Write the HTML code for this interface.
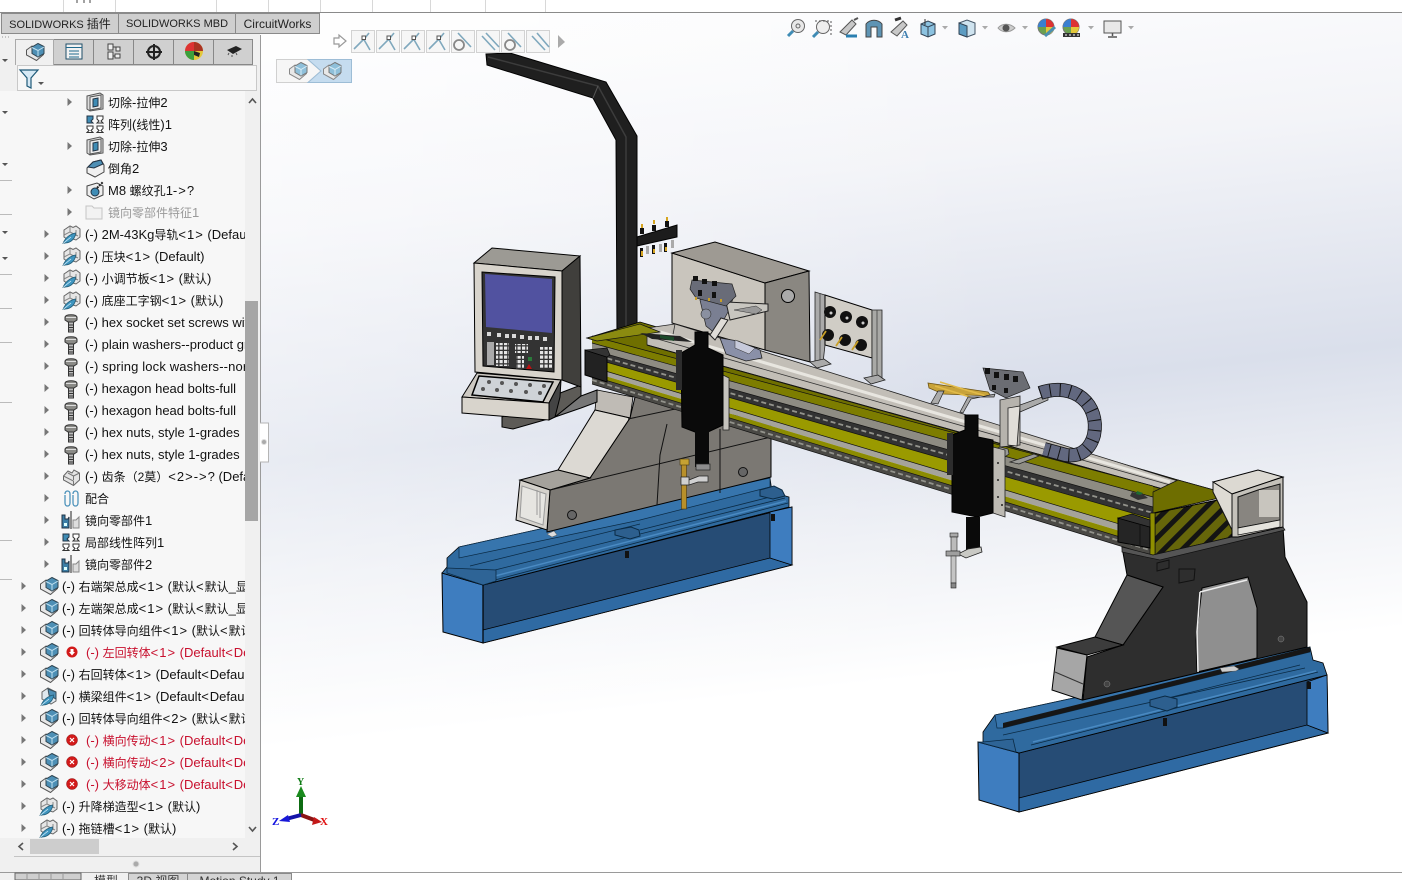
<!DOCTYPE html>
<html><head><meta charset="utf-8"><title>SOLIDWORKS</title>
<style>
html,body{margin:0;padding:0;width:1402px;height:880px;overflow:hidden;background:#fff}
body{position:relative;font-family:"Liberation Sans","Noto Sans CJK SC",sans-serif;color:#111;font-size:13px}
#vp{position:absolute;left:261px;top:13px;width:1141px;height:860px;background:linear-gradient(90deg,rgba(255,255,255,.4),rgba(255,255,255,0) 65%),linear-gradient(174deg,#fff 0,#f3f4f8 22%,#dadfeb 46%,#eef0f5 60%,#fff 75%,#fff 100%)}
#side{position:absolute;left:0;top:13px;width:260px;height:867px;background:#f0f0f0}
#tree{position:absolute;left:0;top:91px;width:245px;height:747px;background:#f7f7f7;overflow:hidden}
.r{position:absolute;white-space:nowrap;height:18px;line-height:18px;margin-top:2px}
.r i{font-style:normal;font-size:12px}
.r b{font-weight:normal;letter-spacing:1px}
.e{color:#c8102e}
.g{color:#9a9a9a}
.tab{position:absolute;top:13px;height:21px;line-height:21px;background:#cfcfcf;border:1px solid #8a8a8a;box-sizing:border-box;text-align:center;font-size:11px;color:#222}
.tab i{font-style:normal;font-size:12px}
.bt{position:absolute;top:873px;height:8px;line-height:14px;font-size:12px;color:#333;background:#d4d4d4;border:1px solid #8a8a8a;border-bottom:0;box-sizing:border-box;text-align:center;overflow:hidden}
svg{position:absolute;left:0;top:0;overflow:hidden}
</style></head><body>
<div id="vp"></div>
<div id="side"></div>
<div id="tree">
<div class="r" style="left:108px;top:1px"><i>切除</i>-<i>拉伸</i>2</div>
<div class="r" style="left:108px;top:23px"><i>阵列</i>(<i>线性</i>)1</div>
<div class="r" style="left:108px;top:45px"><i>切除</i>-<i>拉伸</i>3</div>
<div class="r" style="left:108px;top:67px"><i>倒角</i>2</div>
<div class="r" style="left:108px;top:89px">M8 <i>螺纹孔</i>1<b>-&gt;</b>?</div>
<div class="r g" style="left:108px;top:111px"><i>镜向零部件特征</i>1</div>
<div class="r" style="left:85px;top:133px">(-) 2M-43Kg<i>导轨</i><b>&lt;1&gt;</b> (Default</div>
<div class="r" style="left:85px;top:155px">(-) <i>压块</i><b>&lt;1&gt;</b> (Default)</div>
<div class="r" style="left:85px;top:177px">(-) <i>小调节板</i><b>&lt;1&gt;</b> (<i>默认</i>)</div>
<div class="r" style="left:85px;top:199px">(-) <i>底座工字钢</i><b>&lt;1&gt;</b> (<i>默认</i>)</div>
<div class="r" style="left:85px;top:221px">(-) hex socket set screws with</div>
<div class="r" style="left:85px;top:243px">(-) plain washers--product grade</div>
<div class="r" style="left:85px;top:265px;letter-spacing:.15px">(-) spring lock washers--normal</div>
<div class="r" style="left:85px;top:287px">(-) hexagon head bolts-full</div>
<div class="r" style="left:85px;top:309px">(-) hexagon head bolts-full</div>
<div class="r" style="left:85px;top:331px">(-) hex nuts, style 1-grades</div>
<div class="r" style="left:85px;top:353px">(-) hex nuts, style 1-grades</div>
<div class="r" style="left:85px;top:375px">(-) <i>齿条（2莫）</i><b>&lt;2&gt;-&gt;</b>? (Default</div>
<div class="r" style="left:85px;top:397px"><i>配合</i></div>
<div class="r" style="left:85px;top:419px"><i>镜向零部件</i>1</div>
<div class="r" style="left:85px;top:441px"><i>局部线性阵列</i>1</div>
<div class="r" style="left:85px;top:463px"><i>镜向零部件</i>2</div>
<div class="r" style="left:62px;top:485px">(-) <i>右端架总成</i><b>&lt;1&gt;</b> (<i>默认</i><b>&lt;</b><i>默认</i>_<i>显示</i></div>
<div class="r" style="left:62px;top:507px">(-) <i>左端架总成</i><b>&lt;1&gt;</b> (<i>默认</i><b>&lt;</b><i>默认</i>_<i>显示</i></div>
<div class="r" style="left:62px;top:529px">(-) <i>回转体导向组件</i><b>&lt;1&gt;</b> (<i>默认</i><b>&lt;</b><i>默认</i></div>
<div class="r e" style="left:86px;top:551px">(-) <i>左回转体</i><b>&lt;1&gt;</b> (Default<b>&lt;</b>Default</div>
<div class="r" style="left:62px;top:573px">(-) <i>右回转体</i><b>&lt;1&gt;</b> (Default<b>&lt;</b>Default</div>
<div class="r" style="left:62px;top:595px">(-) <i>横梁组件</i><b>&lt;1&gt;</b> (Default<b>&lt;</b>Default</div>
<div class="r" style="left:62px;top:617px">(-) <i>回转体导向组件</i><b>&lt;2&gt;</b> (<i>默认</i><b>&lt;</b><i>默认</i></div>
<div class="r e" style="left:86px;top:639px">(-) <i>横向传动</i><b>&lt;1&gt;</b> (Default<b>&lt;</b>Default</div>
<div class="r e" style="left:86px;top:661px">(-) <i>横向传动</i><b>&lt;2&gt;</b> (Default<b>&lt;</b>Default</div>
<div class="r e" style="left:86px;top:683px">(-) <i>大移动体</i><b>&lt;1&gt;</b> (Default<b>&lt;</b>Default</div>
<div class="r" style="left:62px;top:705px">(-) <i>升降梯造型</i><b>&lt;1&gt;</b> (<i>默认</i>)</div>
<div class="r" style="left:62px;top:727px">(-) <i>拖链槽</i><b>&lt;1&gt;</b> (<i>默认</i>)</div>
</div>

<svg width="1402" height="880" viewBox="0 0 1402 880" xmlns="http://www.w3.org/2000/svg">
<defs>
<symbol id="ar" viewBox="0 0 8 10" width="8" height="10"><path d="M1.5 1l4.500 4-4.500 4z" fill="#777"/></symbol>
<symbol id="p" viewBox="0 0 20 20" width="20" height="20"><path d="M1.500 8 7 4l3 1 3-3 5.500 2.500v8l-7 6-10-5.500z" fill="#e8e8e8" stroke="#555"/><path d="M7 5 13 1.500 19 4.500v7l-6 3.500-6-3.500z" fill="#4d8fb5" stroke="#2f4450"/><path d="M7 5.500l6 3 6-3.500M13 8.500v6" fill="none" stroke="#bfe0f0"/></symbol>
<symbol id="pl" viewBox="0 0 20 20" width="20" height="20"><path d="M1.500 8 7 4l3 1 3-3 5.500 2.500v8l-7 6-10-5.500z" fill="#e8e8e8" stroke="#888"/><path d="M7 5 13 1.500 19 4.500v7l-6 3.500-6-3.500z" fill="#8fc0da" stroke="#777"/><path d="M7 5.500l6 3 6-3.500M13 8.500v6" fill="none" stroke="#d8ecf6"/></symbol>
<symbol id="gp" viewBox="0 0 20 20" width="20" height="20"><path d="M1.500 9 6 4l4 2 2-3 5.500 3v7l-6 5.500-10-5.500z" fill="#e4e4e4" stroke="#666"/><path d="M6 6l5.500 3 6-3M11.500 9v4M1.500 9l10 5v5" fill="none" stroke="#777"/></symbol>
<symbol id="gpen" viewBox="0 0 20 20" width="20" height="20"><path d="M3 6 9 2l3 1.500L15 2l4 3v8l-4 3-3-1-3 2-6-4z" fill="#e6e6e6" stroke="#666"/><path d="M9 2v6l-6 3M9 8l8 4M15 6v6" fill="none" stroke="#888"/><path d="M2 19.500C4 14 9 10 14.500 9c0 5-4 9.500-10 10z" fill="#3f95bf" stroke="#235d78" stroke-width=".8"/><path d="M2 19.500 10 13" stroke="#d6eefa" stroke-width=".8"/></symbol>
<symbol id="bpen" viewBox="0 0 20 20" width="20" height="20"><path d="M3 6 9 2l8 4v9l-5 3-9-5z" fill="#dfe8ee" stroke="#666"/><path d="M9 3l8 3v7l-7-4z" fill="#4d8fb5" stroke="#3a4f5c"/><path d="M2 19.500C4 14 9 10 14.500 9c0 5-4 9.500-10 10z" fill="#3f95bf" stroke="#235d78" stroke-width=".8"/><path d="M2 19.500 10 13" stroke="#d6eefa" stroke-width=".8"/></symbol>
<symbol id="b" viewBox="0 0 14 20" width="14" height="20"><path d="M1 4c1-3 11-3 12 0v3l-3 2H4L1 7z" fill="#8a8a86" stroke="#333"/><path d="M2 4.500h10" stroke="#ddd"/><path d="M4.500 9h5v10h-5z" fill="#bbb" stroke="#333"/><path d="M4.500 12h5M4.500 14.500h5M4.500 17h5" stroke="#333"/></symbol>
<symbol id="cut" viewBox="0 0 20 20" width="20" height="20"><path d="M2 4l13-3 3 2v14l-13 2-3-2z" fill="#ddd" stroke="#555"/><path d="M5 5l11-2v13L5 18z" fill="#eee" stroke="#555"/><path d="M8 7l5-1v8l-5 1z" fill="#3f8cb5" stroke="#234"/></symbol>
<symbol id="pat" viewBox="0 0 18 18" width="18" height="18"><path d="M1 1h6v3L5 6l2 2H1z" fill="#3f8cb5" stroke="#234"/><path d="M11 1h6v3l-2 2 2 2h-6l2-2-2-2zM1 11h6v2.500L5 15.500l2 2H1l2-2-2-2zM11 11h6v2.500l-2 2 2 2h-6l2-2-2-2z" fill="#fff" stroke="#333"/></symbol>
<symbol id="cham" viewBox="0 0 20 20" width="20" height="20"><path d="M2 10 8 4l8-2 3 5v7l-9 5-8-4z" fill="#f0f0f0" stroke="#444"/><path d="M3 9l5-5 8-2 2 4-9 4z" fill="#4d8fb5" stroke="#234"/></symbol>
<symbol id="hole" viewBox="0 0 20 20" width="20" height="20"><path d="M2 6l10-3 6 3v9l-9 4-7-4z" fill="#eee" stroke="#444"/><circle cx="10" cy="12" r="4" fill="#3f8cb5" stroke="#234"/><path d="M12 8l6-6" stroke="#222" stroke-width="2" stroke-dasharray="2 1"/></symbol>
<symbol id="fo" viewBox="0 0 18 16" width="18" height="16"><path d="M1 2h6l2 2h8v11H1z" fill="#f2f2f2" stroke="#c4c4c4"/></symbol>
<symbol id="clip" viewBox="0 0 18 18" width="18" height="18"><path d="M3 5c0-4 5-4 5 0v9c0 4-5 4-5 0V6M11 5c0-4 5-4 5 0v9c0 4-5 4-5 0V6" fill="none" stroke="#4e93bb" stroke-width="1.300"/></symbol>
<symbol id="mir" viewBox="0 0 20 18" width="20" height="18"><path d="M1 4h3v4h3l1-2v11H1z" fill="#3b7ea6" stroke="#234"/><path d="M3 12h3v3H3z" fill="#dff"/><path d="M10 0v18" stroke="#222"/><path d="M12 17V9h3l3-3v11z" fill="#ddd" stroke="#888"/></symbol>
<symbol id="el" viewBox="0 0 12 12" width="12" height="12"><circle cx="6" cy="6" r="5.500" fill="#d21a1a" stroke="#8c1010" stroke-width=".5"/><path d="M4 4l4 4M8 4l-4 4" stroke="#fff" stroke-width="1.200"/></symbol>
<symbol id="ed" viewBox="0 0 12 12" width="12" height="12"><circle cx="6" cy="6" r="5.500" fill="#d21a1a"/><path d="M4.500 3h3v3H9L6 9.500 3 6h1.500z" fill="#fff"/></symbol>
<symbol id="btn" viewBox="0 0 24 24" width="24" height="24"><rect x=".5" y=".5" width="23" height="22" fill="#f6f6f6" stroke="#d2d2d2"/></symbol>
<symbol id="ang" viewBox="0 0 24 24" width="24" height="24"><path d="M3 19 14 8l4-5M12 8l7 12" fill="none" stroke="#7fa8bd" stroke-width="1.600"/><rect x="11" y="6" width="3.500" height="3.500" fill="#fff" stroke="#555"/></symbol>
<symbol id="ca" viewBox="0 0 7 4" width="7" height="4"><path d="M0 0h6L3 3.500z" fill="#aaa"/></symbol>
<pattern id="hz" patternUnits="userSpaceOnUse" width="13" height="13" patternTransform="rotate(45)"><rect width="13" height="13" fill="#66660a"/><rect width="5" height="13" fill="#141414"/></pattern>
<pattern id="kp" patternUnits="userSpaceOnUse" width="4.500" height="4.500"><rect width="4.500" height="4.500" fill="#333"/><rect width="3.200" height="3.200" fill="#e6e6e6"/></pattern>
</defs>

<!-- top strip -->
<rect x="0" y="0" width="1402" height="12" fill="#fff"/>
<path d="M0 12.500H1402" stroke="#8a8a8a"/>
<path d="M63.500 0V12M115.500 0V12M216.500 0V12M268.500 0V12M320.500 0V12M372.500 0V12M430.500 0V12M485.500 0V12M545.500 0V12" stroke="#d8d8d8"/>
<path d="M77 0v3M84 0v3M90 0v3" stroke="#444"/>
<path d="M260.500 35V873" stroke="#9a9a9a"/>

<!-- BLUE RAIL LEFT -->
<path d="M483 585 792 507V565L483 643z" fill="#264c75" stroke="#000" stroke-width="1"/>
<path d="M483 630 770 558 792 565 483 643z" fill="#2f6aa3" stroke="#000" stroke-width=".8"/>
<path d="M770 512 792 507V565L770 558z" fill="#3e7dbf" stroke="#000" stroke-width=".8"/>
<path d="M442 573 483 585V643L443 632z" fill="#3e7dbf" stroke="#000" stroke-width="1"/>
<path d="M442 573 447 567V558L459 547 770 478 772 492 789 497V507L483 585z" fill="#2f6a9f" stroke="#000" stroke-width=".8"/>
<path d="M459 547 770 478V487L640 520 459 558z" fill="#3775ad" stroke="#0a2a44" stroke-width=".7"/>
<path d="M495 570 785 498M495 580 788 503M640 530 770 497M470 566 640 524" stroke="#0a2a44" stroke-width=".8" fill="none"/>
<path d="M495 576 786 501" stroke="#4a8ac2" stroke-width="1.500" fill="none"/>
<path d="M447 568 496 570V581L483 585 447 573z" fill="#2e6496" stroke="#0a2a44" stroke-width=".8"/>
<path d="M615 530l16-3 8 3 1 6-10 3-15-4z" fill="#2d5f8e" stroke="#0a2a44"/>
<path d="M760 490l14-4 8 4 3 6-12 3-13-3z" fill="#2d5f8e" stroke="#0a2a44"/>
<rect x="625" y="551" width="4" height="7" fill="#111"/><rect x="771" y="514" width="4" height="7" fill="#111"/>
<path d="M483 585V643" stroke="#000" stroke-width="1.200"/>

<!-- BLUE RAIL RIGHT -->
<path d="M1019 753 1327 675 1328 733 1019 812z" fill="#264c75" stroke="#000" stroke-width="1"/>
<path d="M1019 798 1307 725 1328 733 1019 812z" fill="#2f6aa3" stroke="#000" stroke-width=".8"/>
<path d="M1307 682 1327 675 1328 733 1307 725z" fill="#3e7dbf" stroke="#000" stroke-width=".8"/>
<path d="M978 742 1019 753V812L979 800z" fill="#3e7dbf" stroke="#000" stroke-width="1"/>
<path d="M983 742V732L995 715 1310 647 1313 660 1323 663 1327 675 1019 753z" fill="#2f6a9f" stroke="#000" stroke-width=".8"/>
<path d="M995 715 1310 647V652L1003 728H997z" fill="#3775ad" stroke="#0a2a44" stroke-width=".7"/>
<path d="M1003 735 1305 668M1031 745 1318 672M1160 700 1300 665" stroke="#0a2a44" stroke-width=".8" fill="none"/>
<path d="M1033 742 1316 671" stroke="#4a8ac2" stroke-width="1.500" fill="none"/>
<path d="M1003 723 1310 647V652L1003 728z" fill="#161616"/>
<path d="M1150 700l15-4 12 3v8l-10 4-17-5z" fill="#2d5f8e" stroke="#0a2a44"/>
<path d="M983 742l30-3 3 13-38-10z" fill="#2e6496" stroke="#0a2a44" stroke-width=".8"/>
<rect x="1163" y="718" width="4" height="8" fill="#111"/><rect x="1307" y="682" width="4" height="7" fill="#111"/>

<!-- LEFT LEG -->
<path d="M550 490 590 478 630 418 635 397 680 408 771 420V477L547 532z" fill="#7b7873" stroke="#000"/>
<path d="M597 390 633 397 630 418 595 410z" fill="#bfbbb5" stroke="#000" stroke-width=".8"/>
<path d="M558 470 595 410 630 418 590 478z" fill="#dcd9d3" stroke="#000"/>
<path d="M520 480 558 470 590 478 550 490z" fill="#a5a29c" stroke="#000"/>
<path d="M520 480 550 490 547 530 516 520z" fill="#d5d2cc" stroke="#000"/>
<path d="M522 486 546 494 543 525 520 517z" fill="#e6e5e1" stroke="#9a9a9a"/>
<path d="M537 490V515M540 492V518" stroke="#999" fill="none"/>
<path d="M550 490 771 437M628 419 680 408" stroke="#111" fill="none"/>
<path d="M667 424 660 455 657 505M720 429V493" stroke="#111" fill="none"/>
<circle cx="572" cy="515" r="4.500" fill="#666" stroke="#111"/><circle cx="743" cy="472" r="4.500" fill="#666" stroke="#111"/>
<path d="M547 534l5 3 5-2-3-4z" fill="#ddd" stroke="#555" stroke-width=".5"/>

<!-- RIGHT LEG -->
<path d="M1122 547 1283 527 1285 557 1307 602V647L1083 700 1087 657 1123 645 1163 587 1127 575z" fill="#2e2e2e" stroke="#000"/>
<path d="M1127 575 1163 587 1123 645 1095 637z" fill="#555" stroke="#000"/>
<path d="M1057 647 1095 637 1123 645 1087 655z" fill="#3c3c3c" stroke="#000"/>
<path d="M1057 648 1087 655 1082 700 1052 690z" fill="#a6a6a6" stroke="#000"/>
<path d="M1055 672 1083 684" stroke="#333" fill="none"/>
<path d="M1202 588 1248 577 1257 608V658L1197 672 1196 640z" fill="#8f8f8f" stroke="#000"/>
<path d="M1200 592 1247 580M1200 592 1197 632 1198 672" stroke="#eee" stroke-width="1.500" fill="none"/>
<path d="M1179 569h16l-1 11-15 3zM1157 563l12-3v8l-12 3z" fill="none" stroke="#111"/>
<circle cx="1107" cy="684" r="3" fill="#444" stroke="#888" stroke-width=".5"/><circle cx="1281" cy="639" r="3" fill="#444" stroke="#888" stroke-width=".5"/>
<path d="M1220 668l14-2 5 3-3 2-14 1z" fill="#ccc" stroke="#555" stroke-width=".5"/>

<!-- POST + ARM -->
<path d="M486 54 510 53 606 82 637 136V335H617L616 140 593 98 487 65z" fill="#1f1f1f" stroke="#000"/>
<path d="M488 57 598 86 626 137V335" stroke="#3c3c3c" stroke-width="1.500" fill="none"/>
<path d="M593 98 598 86" stroke="#555"/>
<path d="M637 237 677 225V237L637 246z" fill="#1c1c1c" stroke="#000"/>
<g fill="#111"><rect x="640" y="228" width="4" height="6"/><rect x="652" y="225" width="4" height="6"/><rect x="665" y="221" width="4" height="6"/><rect x="640" y="248" width="3" height="9"/><rect x="652" y="245" width="3" height="9"/><rect x="664" y="243" width="3" height="9"/></g>
<g fill="#aaa"><rect x="646" y="246" width="3" height="8"/><rect x="659" y="244" width="3" height="8"/><rect x="671" y="240" width="3" height="8"/></g>
<g fill="#d6a520"><rect x="641" y="224" width="2" height="4"/><rect x="653" y="220" width="2" height="4"/><rect x="666" y="217" width="2" height="4"/><rect x="641" y="251" width="2" height="5"/><rect x="653" y="249" width="2" height="4"/><rect x="665" y="247" width="2" height="4"/></g>

<!-- CONSOLE -->
<path d="M502 417V427L513 429 555 417 581 396V385L555 395z" fill="#5d5b57" stroke="#000"/>
<path d="M581 396 597 390V402L581 408 555 417z" fill="#777" stroke="#000"/>
<path d="M474 263 492 248 580 256 562 271z" fill="#9c9a94" stroke="#000"/>
<path d="M562 271 580 256 581 387 562 380z" fill="#403f3c" stroke="#000"/>
<path d="M474 263 562 271V380L475 372z" fill="#d8d4cc" stroke="#000"/>
<path d="M482 272 555 277 554 372 483 366z" fill="#333" stroke="#000"/>
<path d="M485 274 552 279V333L486 327z" fill="#5152a0"/>
<g fill="#d8d8d8"><rect x="487" y="332" width="4" height="4"/><rect x="497" y="333" width="4" height="4"/><rect x="505" y="334" width="4" height="4"/><rect x="512" y="334" width="4" height="4"/><rect x="520" y="335" width="4" height="4"/><rect x="528" y="336" width="4" height="4"/><rect x="535" y="336" width="4" height="4"/><rect x="543" y="337" width="4" height="4"/></g>
<rect x="487" y="342" width="7" height="23" fill="#aaa"/>
<rect x="496" y="343" width="13" height="23" fill="url(#kp)"/><rect x="515" y="344" width="13" height="9" fill="url(#kp)"/><rect x="516" y="356" width="8" height="13" fill="url(#kp)"/><rect x="539" y="347" width="13" height="22" fill="url(#kp)"/>
<rect x="528" y="357" width="4" height="4" fill="#2a7a3a"/><path d="M529 364l3 5h-6z" fill="#b11"/>
<path d="M477 373 561 380 549 403 462 397z" fill="#cdc9c2" stroke="#000"/>
<path d="M479 376 553 382 543 402 472 395z" fill="#cfd3d7" stroke="#000" stroke-width="1.500"/>
<g fill="#555"><circle cx="489" cy="382" r="2"/><circle cx="502" cy="383" r="2"/><circle cx="516" cy="384" r="2"/><circle cx="530" cy="385" r="2"/><circle cx="544" cy="386" r="2"/><circle cx="483" cy="389" r="2"/><circle cx="497" cy="390" r="2"/><circle cx="511" cy="391" r="2"/><circle cx="526" cy="392" r="2"/><circle cx="540" cy="393" r="2"/></g>
<path d="M462 397 549 403V420L462 413z" fill="#d8d4cc" stroke="#000"/>
<path d="M549 403 561 380 560 397 555 417 549 420z" fill="#444" stroke="#000"/>

<!-- BIG BOX + PANEL -->
<path d="M672 253 765 283V350L672 323z" fill="#c9c5bd" stroke="#000"/>
<path d="M672 253 715 242 809 271 765 283z" fill="#9e9a93" stroke="#000"/>
<path d="M765 283 809 271 810 362 765 350z" fill="#8a8781" stroke="#000"/>
<circle cx="788" cy="296" r="6.500" fill="#aaa" stroke="#000"/>
<path d="M815 292l10 3v50l-2 18h-8z" fill="#aaa" stroke="#222" stroke-width=".8"/>
<path d="M825 295 872 310V358L825 345z" fill="#d0cdc6" stroke="#000"/>
<path d="M872 310h10v68h-10z" fill="#a9a9a6" stroke="#222" stroke-width=".8"/>
<path d="M877 310v68M820 293v70" stroke="#444" stroke-width=".8"/>
<path d="M810 362l14-3 7 5-14 4zM864 378l14-3 7 5-14 4z" fill="#aaa" stroke="#222" stroke-width=".8"/>
<g fill="#111"><circle cx="830" cy="312" r="6"/><circle cx="846" cy="317" r="6"/><circle cx="862" cy="322" r="6"/><circle cx="828" cy="335" r="6"/><circle cx="845" cy="340" r="6"/><circle cx="861" cy="345" r="6"/></g>
<path d="M820 340l6-9M836 346l6-9M852 350l6-9" stroke="#c9a028" stroke-width="1.800"/>
<circle cx="831" cy="313" r="1.500" fill="#ccc"/><circle cx="847" cy="318" r="1.500" fill="#ccc"/><circle cx="863" cy="323" r="1.500" fill="#ccc"/>

<!-- BEAM TOP -->
<path d="M587 338 640 322 1178 480 1232 495 1153 513z" fill="#6f6f00" stroke="#000" stroke-width=".8"/>
<path d="M647 328 675 324 1178 481 1177 493 820 393 647 345z" fill="#c2beb7" stroke="#222" stroke-width=".8"/>
<path d="M647 336 1177 487M675 324 672 340" stroke="#333" stroke-width=".8" fill="none"/>
<path d="M660 332 1170 482" stroke="#e8e6e0" stroke-width="3"/>
<path d="M647 345 1177 493" stroke="#111" stroke-width="1"/>

<!-- BEAM FRONT BANDS -->
<path d="M592 336 1153 486V497L592 343z" fill="#7d7d00"/>
<path d="M592 343 1153 497V507L592 350z" fill="#8e8c83"/>
<path d="M592 350 1153 507V519L592 358z" fill="#333"/>
<path d="M592 358 1153 519V534L592 367z" fill="#9a9a00"/>
<path d="M592 367 1153 534V541L592 372z" fill="#a5a39b"/>
<path d="M592 372 1153 541V547L592 376z" fill="#8c8c00"/>
<path d="M592 376 1153 547V556L592 384z" fill="#4a4945"/>
<path d="M592 354 1153 513" stroke="#93938c" stroke-width="1.800" stroke-dasharray="5 3" fill="none"/>
<path d="M592 380 1153 551" stroke="#93938c" stroke-width="1.800" stroke-dasharray="5 3" fill="none"/>
<path d="M592 336 1153 486M592 343 1153 497M592 350 1153 507M592 358 1153 519M592 367 1153 534M592 376 1153 547M592 384 1153 556" stroke="#111" stroke-width=".7" fill="none"/>
<path d="M587 338 640 324 660 332 597 341z" fill="#8b8b10" stroke="#111" stroke-width=".7"/>
<path d="M640 333l40 3 12 6-40-3z" fill="#222"/>
<path d="M660 335l14 2v4l-14-3z" fill="#1c4a2a"/>

<!-- Left end box -->
<path d="M585 350 607 357V382L585 375z" fill="#222" stroke="#000"/>
<path d="M585 350l22-2 3 7-3 2z" fill="#333" stroke="#000" stroke-width=".6"/>

<!-- Machine on left box -->
<path d="M700 300l6 26 10 8 12-22 6-16-20-6z" fill="#7a7f92" stroke="#222" stroke-width=".7"/>
<path d="M726 302 768 304 768 311 730 320z" fill="#c8c6c0" stroke="#222"/>
<path d="M710 335 721 318 728 320 715 340z" fill="#e0ddd8" stroke="#222"/>
<path d="M720 338l18 3 22 9 2 8-16 3-20-7z" fill="#8a90a8" stroke="#222" stroke-width=".8"/>
<path d="M735 340l20 8-6 6-14-6z" fill="#c7cadb" stroke="#333" stroke-width=".5"/>
<path d="M734 310l22-4 6 4-6 4z" fill="#999" stroke="#333" stroke-width=".5"/>
<path d="M692 280l40 4 4 12-10 10-30-8-6-9z" fill="#696c78" stroke="#222" stroke-width=".7"/>
<g fill="#111"><rect x="693" y="276" width="5" height="5"/><rect x="702" y="279" width="5" height="5"/><rect x="712" y="281" width="5" height="5"/><rect x="698" y="290" width="4" height="6"/><rect x="712" y="292" width="4" height="6"/></g>
<g fill="#c9a028"><rect x="695" y="297" width="2" height="3"/><rect x="708" y="298" width="2" height="3"/><rect x="720" y="299" width="2" height="3"/></g>
<circle cx="706" cy="314" r="5" fill="#8a90a0" stroke="#333" stroke-width=".6"/>

<!-- Left carriage -->
<path d="M723 375 729 378V430H723z" fill="#c5c3bd" stroke="#222" stroke-width=".8"/>
<path d="M681 353 695 345V332H708V348L723 355V425L708 432 695 432 682 427z" fill="#0a0a0a" stroke="#000"/>
<rect x="676" y="350" width="6" height="40" fill="#2d2d2d"/>
<rect x="695" y="431" width="14" height="36" fill="#0a0a0a"/>
<rect x="696" y="464" width="14" height="6" fill="#8d8d8d" stroke="#222" stroke-width=".7"/>
<rect x="681.500" y="462" width="5" height="47" fill="#b8902a" stroke="#4a3a10" stroke-width=".6"/>
<rect x="680" y="459" width="9" height="6" fill="#c6a233" stroke="#4a3a10" stroke-width=".6"/>
<path d="M681 477h8v8h-8zM689 480l10-4h9v6h-10l-9 3z" fill="#d0d0d0" stroke="#222" stroke-width=".7"/>

<!-- Right machine -->
<path d="M928 383l60 9 3 4-48-2-14-6z" fill="#c8a33a" stroke="#6e5414" stroke-width=".8"/>
<path d="M940 382l46 14M935 386l38 12" stroke="#e2bb49" stroke-width="1.500" fill="none"/>
<path d="M931 403l7-12h6l-6 13zM960 412l8-15h26l1-3-24 5-8 14z" fill="#aaa" stroke="#222" stroke-width=".7"/>
<path d="M983 368l40 4 7 16-24 10-16-8z" fill="#6b6d73" stroke="#222" stroke-width=".7"/>
<g fill="#111"><rect x="985" y="368" width="5" height="6"/><rect x="994" y="372" width="5" height="6"/><rect x="1004" y="374" width="5" height="6"/><rect x="1013" y="376" width="5" height="6"/><rect x="992" y="385" width="4" height="5"/><rect x="1004" y="388" width="4" height="5"/></g>
<path d="M1000 400 1020 396V445L1000 447z" fill="#b6b3ad" stroke="#222" stroke-width=".8"/>
<path d="M1008 408 1020 406 1017 446 1008 445z" fill="#e0ddd8" stroke="#222" stroke-width=".8"/>
<path d="M1020 412 1048 400V395L1020 405z" fill="#aaa" stroke="#222" stroke-width=".7"/>
<path d="M1040 393C1075 381 1100 405 1094 435 1090 450 1080 457 1066 455L1044 449" fill="none" stroke="#111" stroke-width="14"/>
<path d="M1040 393C1075 381 1100 405 1094 435 1090 450 1080 457 1066 455L1044 449" fill="none" stroke="#62687f" stroke-width="12.500"/>
<path d="M1040 393C1075 381 1100 405 1094 435 1090 450 1080 457 1066 455L1044 449" fill="none" stroke="#111" stroke-width="12.500" stroke-dasharray="1 9"/>
<path d="M1000 447l8 2 1 5-9 6h-14l3-8zM1010 462l24-8 5 2-20 8z" fill="#9a9a96" stroke="#222" stroke-width=".7"/>
<path d="M1132 492l12 3 4 3-10 2-8-4z" fill="#333"/><path d="M1137 491l6 2-3 2-4-1z" fill="#1f6b33"/>
<path d="M1153 500l16-4 16 5-14 5z" fill="#555" stroke="#222" stroke-width=".5"/>

<!-- Right carriage -->
<path d="M993 447 1005 450V517L993 513z" fill="#bdbab3" stroke="#222" stroke-width=".8"/>
<g fill="#222"><circle cx="998" cy="463" r="1"/><circle cx="998" cy="480" r="1"/><circle cx="998" cy="497" r="1"/><circle cx="1002" cy="505" r="1"/></g>
<path d="M952 435 965 430V415H978V437L993 440V513L977 517 952 512z" fill="#0a0a0a" stroke="#000"/>
<rect x="947" y="433" width="6" height="42" fill="#2d2d2d"/>
<rect x="966" y="517" width="14" height="36" fill="#0a0a0a"/>
<path d="M958 554l10-5 13-2 1 5-16 6z" fill="#c9c9c4" stroke="#222" stroke-width=".8"/>
<rect x="950" y="533" width="8" height="4" fill="#aaa" stroke="#222" stroke-width=".6"/>
<rect x="951" y="537" width="6" height="14" fill="#bbb" stroke="#222" stroke-width=".6"/>
<rect x="946" y="551" width="14" height="5" fill="#9f9f9f" stroke="#222" stroke-width=".6"/>
<rect x="951" y="556" width="5" height="27" fill="#c4c4c4" stroke="#333" stroke-width=".6"/>
<rect x="951" y="583" width="5" height="5" fill="#888" stroke="#222" stroke-width=".6"/>

<!-- Right end -->
<path d="M1153 513 1232 495 1178 480 1153 492z" fill="#6e6e00" stroke="#111" stroke-width=".7"/>
<path d="M1155 513 1232 497V537L1155 555z" fill="url(#hz)" stroke="#000"/>
<path d="M1150 513 1155 513V555H1150z" fill="#8f8f00" stroke="#111" stroke-width=".7"/>
<path d="M1118 518 1150 527V548L1118 542z" fill="#252525" stroke="#000"/>
<path d="M1118 518 1132 514 1150 520V527z" fill="#333" stroke="#000" stroke-width=".6"/>
<path d="M1140 524v22" stroke="#111"/>
<path d="M1122 547 1153 555 1232 537 1283 527 1285 530 1160 560 1122 552z" fill="#555" stroke="#111" stroke-width=".7"/>
<path d="M1213 482 1258 470 1283 477 1232 494z" fill="#dcd9d2" stroke="#000"/>
<path d="M1232 494 1283 477V527L1238 537 1232 537z" fill="#c4c1ba" stroke="#000"/>
<path d="M1238 497 1258 490 1280 484V520L1238 528z" fill="#888580" stroke="#111"/>
<path d="M1259 490h20v27h-20z" fill="#c8c5be"/>
<path d="M1238 528 1280 520V527L1238 535z" fill="#e4e2dc" stroke="#111" stroke-width=".7"/>
<path d="M1213 482 1232 494V530L1213 492z" fill="#dedbd4" stroke="#111"/>

<!-- TRIAD -->
<path d="M301 815V795" stroke="#0d6b12" stroke-width="4"/><path d="M296 797 301 786 306 797z" fill="#1a8a1e"/>
<path d="M301 815 317 821" stroke="#8a1414" stroke-width="4"/><path d="M314 817 322 822 312 825z" fill="#c41818"/>
<path d="M301 815 286 819" stroke="#1414a8" stroke-width="4"/><path d="M288 815 279 821 290 822z" fill="#1818d8"/>
<text x="297" y="785" font-family="Liberation Serif,serif" font-size="10" fill="#0d7a12" font-weight="700">Y</text>
<text x="320" y="825" font-family="Liberation Serif,serif" font-size="11" fill="#e01010" font-weight="700">X</text>
<text x="272" y="825" font-family="Liberation Serif,serif" font-size="11" fill="#1414e0" font-weight="700">Z</text>

<!-- TOOLBAR -->
<path d="M334 38h5v-3l7 6-7 6v-3h-5z" fill="#fff" stroke="#999" stroke-width="1.200"/>
<g>
<use href="#btn" x="351" y="30"/><use href="#btn" x="376" y="30"/><use href="#btn" x="401" y="30"/><use href="#btn" x="426" y="30"/><use href="#btn" x="451" y="30"/><use href="#btn" x="476" y="30"/><use href="#btn" x="501" y="30"/><use href="#btn" x="526" y="30"/>
<use href="#ang" x="351" y="30"/><use href="#ang" x="376" y="30"/><use href="#ang" x="401" y="30"/><use href="#ang" x="426" y="30"/>
</g>
<path d="M458 33 471 47M482 36 495 50M486 33 499 47M508 33 521 47M532 36 545 50M537 33 549 47" stroke="#7fa8bd" stroke-width="1.600" fill="none"/>
<circle cx="459" cy="45" r="5" fill="none" stroke="#888" stroke-width="1.800"/><circle cx="510" cy="45" r="5" fill="none" stroke="#888" stroke-width="1.800"/>
<path d="M558 35l7 7-7 6z" fill="#aaa"/>

<!-- breadcrumb -->
<path d="M276.500 59.500H308l13 11.500-13 11.500H276.500z" fill="#f6f6f6" stroke="#d0d0d0"/>
<path d="M308 59.500h43.500v23H308l13-11.500z" fill="#c5dcef" stroke="#9dbdd6"/>
<use href="#pl" x="288" y="61"/><use href="#pl" x="322" y="61"/>

<!-- HEADS-UP ICONS -->
<g fill="none">
<circle cx="798" cy="26" r="6.500" fill="#e8e8e8" stroke="#666"/><path d="M793 31 788 36" stroke="#3f8cb5" stroke-width="3"/><circle cx="798" cy="26" r="2" stroke="#666"/>
<circle cx="823" cy="27" r="6.500" fill="#eee" stroke="#666"/><path d="M818 32 813 37" stroke="#3f8cb5" stroke-width="3"/><path d="M815 21h16v14" stroke="#555" stroke-dasharray="2 2"/>
<path d="M840 32 852 20l4 4-10 11z" fill="#c8c8c8" stroke="#555"/><path d="M846 36h11" stroke="#2a7fb0" stroke-width="3"/><path d="M858 18l-4 2" stroke="#555" stroke-width="2"/>
<path d="M866 24c4-5 12-5 16 0v13h-5V27h-6v10h-5z" fill="#5e94b4" stroke="#444"/>
<path d="M891 32 903 21l4 4-10 11z" fill="#c8c8c8" stroke="#555"/><path d="M895 20l6-2" stroke="#333" stroke-width="3"/><text x="901" y="38" font-family="Liberation Serif,serif" font-size="11" fill="#3f7fb0" font-weight="700">A</text>
<path d="M921 24l7-3 7 3v10l-7 3-7-3z" fill="#8cc2e0" stroke="#345"/><path d="M921 24l7 3 7-3M928 27v10" stroke="#345"/><path d="M925 19v6" stroke="#333"/>
<path d="M959 23l8-3 8 3v11l-8 3-8-3z" fill="#cfe3ef" stroke="#456"/><path d="M959 23l8 3v11l-8-3z" fill="#5d9cc2" stroke="#345"/>
<path d="M998 28c4-5 12-5 17 0-5 5-13 5-17 0z" fill="#ccc" stroke="#999"/><circle cx="1006" cy="28" r="3.500" fill="#555"/>
<circle cx="1046" cy="27" r="8" fill="#6aa050" stroke="#777"/><path d="M1046 19a8 8 0 0 1 8 8h-8z" fill="#d33"/><path d="M1046 19a8 8 0 0 0-8 8h8z" fill="#3a7fd0"/><path d="M1046 27v8a8 8 0 0 0 8-8z" fill="#e3c73a"/><path d="M1045 36 1055 27" stroke="#4a90b0" stroke-width="3"/>
<circle cx="1071" cy="27" r="8" fill="#6aa050" stroke="#777"/><path d="M1071 19a8 8 0 0 1 8 8h-8z" fill="#d33"/><path d="M1071 19a8 8 0 0 0-8 8h8z" fill="#3a7fd0"/><path d="M1071 27v8a8 8 0 0 0 8-8z" fill="#e3c73a"/><rect x="1063" y="33" width="17" height="4" fill="#333"/><path d="M1065 35h2M1069 35h2M1073 35h2M1077 35h2" stroke="#fff"/>
<rect x="1104" y="21" width="17" height="12" fill="#e8e8e8" stroke="#555"/><path d="M1112.500 33v3M1108 37h9" stroke="#555" stroke-width="1.500"/>
</g>
<use href="#ca" x="942" y="26"/><use href="#ca" x="982" y="26"/><use href="#ca" x="1022" y="26"/><use href="#ca" x="1088" y="26"/><use href="#ca" x="1128" y="26"/>

<!-- FM tabs -->
<rect x="15.500" y="39.500" width="237" height="25" fill="#d0d0d0" stroke="#888"/>
<path d="M53.500 40V65M93.500 40V65M133.500 40V65M173.500 40V65M213.500 40V65" stroke="#888"/>
<rect x="16" y="39" width="37" height="27" fill="#f0f0f0"/>
<path d="M15.500 65V39.500H53.500V65" fill="none" stroke="#aaa"/>
<use href="#p" x="25" y="42"/>
<rect x="66" y="44" width="16" height="15" fill="#f2f2f2" stroke="#1f4e68"/><path d="M66 47.500H82M69 51h10M69 54h10M69 57h10" stroke="#1f6a8e"/>
<path d="M108 44h5v6h-5zM108 52h5v7h-5zM116 47h4v4h-4zM115 54h5v4h-5z" fill="#eee" stroke="#444"/><path d="M113 47h3M113 56h2" stroke="#444"/>
<circle cx="154" cy="52" r="6" fill="none" stroke="#222" stroke-width="2"/><path d="M146 52h16M154 44v16" stroke="#222" stroke-width="2"/>
<circle cx="194" cy="51" r="9" fill="#e3c73a"/><path d="M194 42a9 9 0 0 1 9 9h-9z" fill="#a32"/><path d="M194 42a9 9 0 0 0-9 9h9z" fill="#d33"/><path d="M185 51a9 9 0 0 0 9 9v-9z" fill="#3c9f3c"/><path d="M194 51l6 2-1 4-5-2z" fill="#222"/>
<path d="M227 50l9-4 6 3-9 5z" fill="#222"/><path d="M229 53l-1 2M232 55v2M236 53l1 2" stroke="#555"/>

<!-- filter -->
<rect x="17.500" y="65.500" width="239" height="25" fill="#f7f7f7" stroke="#c8c8c8"/>
<path d="M20 70h18l-7 8v10l-4-2v-8z" fill="#d6e9f5" stroke="#1f5a78" stroke-width="1.200"/>
<path d="M38 82h6l-3 3z" fill="#555"/>

<!-- left edge marks -->
<g fill="#555"><path d="M2 59h6l-3 3zM2 111h6l-3 3zM2 163h6l-3 3zM2 231h6l-3 3zM2 257h6l-3 3z"/></g>
<path d="M0 180.500H12M0 214.500H12M0 274.500H12M0 308.500H12M0 342.500H12M0 402.500H12M0 540.500H12M0 579.500H12" stroke="#bbb"/>
<path d="M2 37h2M5 37h2M8 37h2" stroke="#999" stroke-dasharray="1 1"/>

<!-- tree arrows -->
<g>
<use href="#ar" x="66" y="97"/><use href="#ar" x="66" y="141"/><use href="#ar" x="66" y="185"/><use href="#ar" x="66" y="207"/>
<use href="#ar" x="43" y="229"/><use href="#ar" x="43" y="251"/><use href="#ar" x="43" y="273"/><use href="#ar" x="43" y="295"/><use href="#ar" x="43" y="317"/><use href="#ar" x="43" y="339"/><use href="#ar" x="43" y="361"/><use href="#ar" x="43" y="383"/><use href="#ar" x="43" y="405"/><use href="#ar" x="43" y="427"/><use href="#ar" x="43" y="449"/><use href="#ar" x="43" y="471"/><use href="#ar" x="43" y="493"/><use href="#ar" x="43" y="515"/><use href="#ar" x="43" y="537"/><use href="#ar" x="43" y="559"/>
<use href="#ar" x="20" y="581"/><use href="#ar" x="20" y="603"/><use href="#ar" x="20" y="625"/><use href="#ar" x="20" y="647"/><use href="#ar" x="20" y="669"/><use href="#ar" x="20" y="691"/><use href="#ar" x="20" y="713"/><use href="#ar" x="20" y="735"/><use href="#ar" x="20" y="757"/><use href="#ar" x="20" y="779"/><use href="#ar" x="20" y="801"/><use href="#ar" x="20" y="823"/>
</g>
<!-- tree icons -->
<use href="#cut" x="85" y="92"/><use href="#pat" x="86" y="115"/><use href="#cut" x="85" y="136"/><use href="#cham" x="85" y="158"/><use href="#hole" x="85" y="180"/><use href="#fo" x="85" y="204"/>
<use href="#gpen" x="61" y="224"/><use href="#gpen" x="61" y="246"/><use href="#gpen" x="61" y="268"/><use href="#gpen" x="61" y="290"/>
<use href="#b" x="64" y="313"/><use href="#b" x="64" y="335"/><use href="#b" x="64" y="357"/><use href="#b" x="64" y="379"/><use href="#b" x="64" y="401"/><use href="#b" x="64" y="423"/><use href="#b" x="64" y="445"/>
<use href="#gp" x="62" y="467"/><use href="#clip" x="62" y="489"/><use href="#mir" x="61" y="511"/><use href="#pat" x="62" y="533"/><use href="#mir" x="61" y="555"/>
<use href="#p" x="39" y="576"/><use href="#p" x="39" y="598"/><use href="#p" x="39" y="620"/><use href="#p" x="39" y="642"/><use href="#p" x="39" y="664"/><use href="#bpen" x="39" y="686"/><use href="#p" x="39" y="708"/><use href="#p" x="39" y="730"/><use href="#p" x="39" y="752"/><use href="#p" x="39" y="774"/><use href="#gpen" x="38" y="796"/><use href="#gpen" x="38" y="818"/>
<use href="#ed" x="66" y="646"/><use href="#el" x="66" y="734"/><use href="#el" x="66" y="756"/><use href="#el" x="66" y="778"/>

<!-- scrollbars -->
<rect x="245" y="91" width="15" height="747" fill="#f0f0f0"/>
<rect x="245" y="301" width="13" height="220" fill="#a6a6a6"/>
<path d="M249 103l3.500-4 3.500 4M249 827l3.500 4 3.500-4" fill="none" stroke="#555" stroke-width="1.600"/>
<rect x="15" y="838" width="245" height="17" fill="#f0f0f0"/>
<rect x="30" y="839" width="69" height="15" fill="#cdcdcd"/>
<path d="M23 843l-4 3.500 4 3.500M233 843l4 3.500-4 3.500" fill="none" stroke="#555" stroke-width="1.600"/>
<path d="M14 856.500H260" stroke="#c4c4c4"/>
<circle cx="136" cy="864" r="3" fill="#aaa" stroke="#ddd"/>
<path d="M0 872.500H1402" stroke="#9a9a9a"/>
<rect x="15" y="873" width="66" height="7" fill="#cfcfcf" stroke="#666"/>
<path d="M27 873v7M39 873v7M51 873v7M63 873v7" stroke="#999"/>
<!-- handle -->
<path d="M260 423h8.500v39H260" fill="#fff" stroke="#b5b5b5"/>
<circle cx="264" cy="442" r="2.500" fill="#aaa" stroke="#ddd"/>
</svg>

<div class="tab" style="left:1px;width:118px">SOLIDWORKS <i>插件</i></div>
<div class="tab" style="left:118px;width:118px">SOLIDWORKS MBD</div>
<div class="tab" style="left:235px;width:85px;font-size:12px">CircuitWorks</div>
<div class="bt" style="left:84px;width:44px;background:#f0f0f0;border-color:#f0f0f0">模型</div>
<div class="bt" style="left:128px;width:60px">3D 视图</div>
<div class="bt" style="left:187px;width:105px">Motion Study 1</div>
</body></html>
